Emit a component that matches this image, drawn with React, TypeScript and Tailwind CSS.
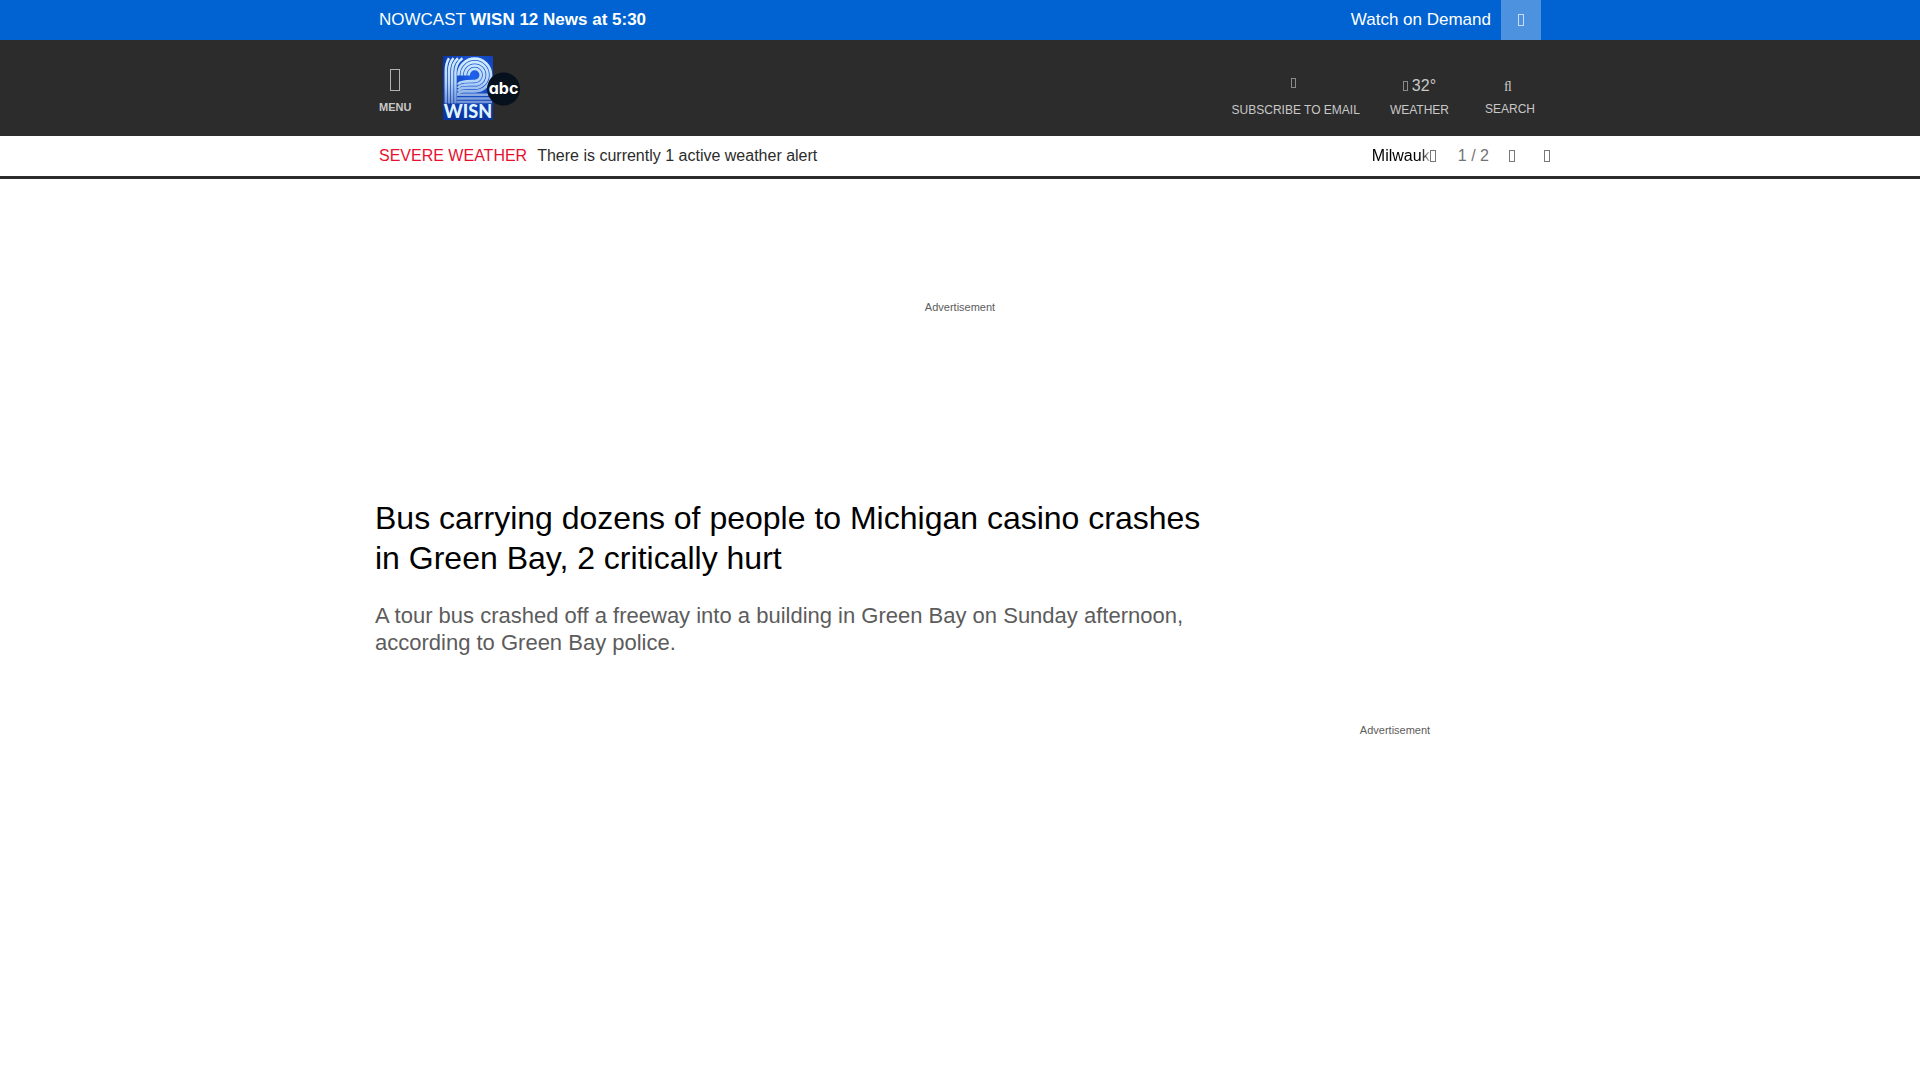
type GlyphProps = { className: string };

function Glyph({ className }: GlyphProps) {
  return <span aria-hidden="true" className={`inline-block shrink-0 border ${className}`} />;
}

function Logo() {
  const arcs = [16.3, 12.9, 9.5, 6.1];
  return (
    <svg viewBox="0 0 78 64" className="h-16 w-[78px]" role="img" aria-label="WISN 12 abc">
      <defs>
        <radialGradient id="bg" cx="0.6" cy="0.3" r="0.7">
          <stop offset="0" stopColor="#1f62ee" />
          <stop offset="1" stopColor="#0a349f" />
        </radialGradient>
        <linearGradient id="stripe" gradientUnits="userSpaceOnUse" x1="0" y1="0" x2="0" y2="48">
          <stop offset="0" stopColor="#d4f0ff" />
          <stop offset="0.55" stopColor="#b4d4f6" />
          <stop offset="1" stopColor="#6d8fd2" />
        </linearGradient>
      </defs>
      <rect width="50" height="64" fill="url(#bg)" />
      <g fill="none" stroke="url(#stripe)" strokeWidth="2.5">
        <path d="M2.8 47.5V16Q2.8 7 6 2.2" />
        <path d="M6 47.5V16Q6 7 10.5 2.2" />
        <path d="M9.2 47.5V16Q9.2 7 15 2.2" />
        <path d="M12.4 47.5V17Q12.4 7 19.5 2.2" />
        {arcs.map((r) => (
          <path
            key={r}
            strokeWidth="2.7"
            d={`M${31.7 - r} 19.5V19a${r} ${r} 0 0 1 ${r * 2} 0a${r} ${r} 0 0 1 ${-r} ${r}H${36.5 - r}Q15.5 ${19 + r} 15.3 ${22.5 + r}`}
          />
        ))}
        <path d="M14 38.8H49M14 42.4H49M14 46H49" />
      </g>
      <text x="25" y="62" textAnchor="middle" className="font-[Lato,sans-serif] text-[18px] font-black" fill="#dff4ff">WISN</text>
      <circle cx="60.5" cy="33" r="16.5" fill="#06111d" />
      <text x="60.5" y="37.5" textAnchor="middle" className="font-[Inter,sans-serif] text-[16px] font-bold [font-feature-settings:'cv11']" fill="#fff">abc</text>
    </svg>
  );
}

function TopBar() {
  return (
    <div className="bg-[#0063d1] text-[17px] text-white">
      <div className="mx-auto flex h-10 max-w-[1162px] items-center justify-between">
        <a href="#nowcast" className="leading-6">
          NOWCAST <strong>WISN 12 News at 5:30</strong>
        </a>
        <div className="flex items-center gap-2.5">
          <a href="#demand" className="leading-6">Watch on Demand</a>
          <button type="button" aria-label="Close" className="flex h-10 w-10 items-center justify-center bg-[#4d92df]">
            <Glyph className="h-3 w-1.5 border-white/70" />
          </button>
        </div>
      </div>
    </div>
  );
}

function Header() {
  return (
    <header className="bg-[#2c2c2c] text-xs text-[#c8c8c8]">
      <div className="mx-auto flex h-24 max-w-[1162px] items-center justify-between">
        <div className="flex items-center gap-8">
          <button type="button" className="flex flex-col items-center gap-2 pt-2 text-[11px] leading-4 font-bold">
            <Glyph className="h-[22px] w-2.5 border-[#b0b0b0]" />
            MENU
          </button>
          <a href="#home"><Logo /></a>
        </div>
        <nav className="flex items-end pt-[18px] pr-1.5">
          <a href="#subscribe" className="mr-[30px] flex flex-col items-center leading-4">
            <span className="mb-3.5 flex pr-1">
              <Glyph className="h-2.5 w-[5px] border-[#8a8a8a]" />
            </span>
            SUBSCRIBE TO EMAIL
          </a>
          <a href="#weather" className="mr-9 flex flex-col items-center leading-4">
            <span className="mb-1.5 flex items-center gap-1 text-base leading-5">
              <Glyph className="h-2.5 w-[5px] border-[#8a8a8a]" />
              32°
            </span>
            WEATHER
          </a>
          <button type="button" className="flex flex-col items-center pb-px leading-4">
            <span aria-hidden="true" className="mb-1 pr-1 font-['Liberation_Serif',serif] text-sm leading-5">ﬂ</span>
            SEARCH
          </button>
        </nav>
      </div>
    </header>
  );
}

function AlertBar() {
  return (
    <section aria-label="Weather alerts" className="border-b-3 border-[#2c2c2c] text-base text-[#2c2c2c]">
      <div className="mx-auto flex h-10 max-w-[1162px] items-center justify-between">
        <p>
          <a href="#alerts" className="mr-2.5 text-[#e8102f]">SEVERE WEATHER</a>
          There is currently 1 active weather alert
        </p>
        <div className="-mr-[9px] flex items-center">
          <span className="w-[58px] overflow-hidden bg-linear-to-r from-black from-85% to-black/20 bg-clip-text whitespace-nowrap text-transparent">Milwaukee</span>
          <button type="button" aria-label="Previous" className="flex">
            <Glyph className="h-3 w-1.5 border-[#777]" />
          </button>
          <span className="ml-[22px] text-[#737373]">1 / 2</span>
          <button type="button" aria-label="Next" className="ml-5 flex">
            <Glyph className="h-3 w-1.5 border-[#777]" />
          </button>
          <button type="button" aria-label="Dismiss" className="ml-[29px] flex">
            <Glyph className="h-3 w-1.5 border-[#777]" />
          </button>
        </div>
      </div>
    </section>
  );
}

export default function App() {
  return (
    <div className="min-h-screen bg-white font-['Liberation_Sans',Arial,sans-serif]">
      <TopBar />
      <Header />
      <AlertBar />
      <main className="mx-auto max-w-[1170px]">
        <aside className="h-[319px] pt-[120px] text-center text-[11px] leading-4 text-[#5c5c5c]">Advertisement</aside>
        <div className="flex justify-between">
          <article className="w-[840px]">
            <h1 className="text-[32px] leading-10 text-black">
              Bus carrying dozens of people to Michigan casino crashes in Green Bay, 2 critically hurt
            </h1>
            <p className="mt-6 text-[22px] leading-[27px] text-[#5c5c5c]">
              A tour bus crashed off a freeway into a building in Green Bay on Sunday afternoon, according to Green Bay police.
            </p>
          </article>
          <aside className="w-[300px] pt-[224px] text-center text-[11px] leading-4 text-[#5c5c5c]">Advertisement</aside>
        </div>
      </main>
    </div>
  );
}
